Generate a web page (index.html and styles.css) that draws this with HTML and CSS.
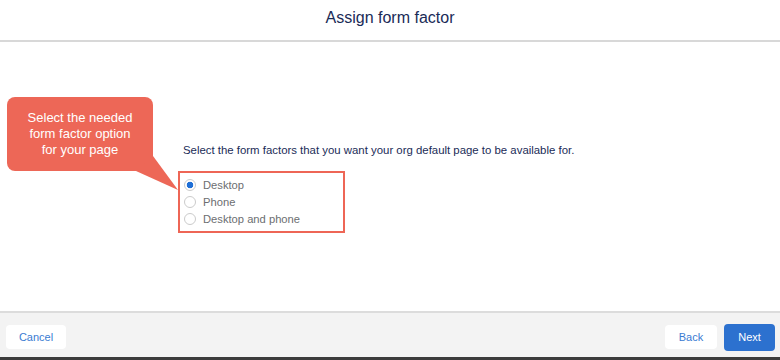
FILE: index.html
```html
<!DOCTYPE html>
<html lang="en">
<head>
    <meta charset="UTF-8">
    <meta name="viewport" content="width=device-width, initial-scale=1.0">
    <title>Assign form factor</title>
    <link rel="stylesheet" href="styles.css">
</head>
<body>
    <div class="header">
        <h1>Assign form factor</h1>
    </div>

    <div class="main">
        <p class="intro">Select the form factors that you want your org default page to be available for.</p>

        <div class="radio-group">
            <label class="radio-row">
                <input type="radio" name="factor" checked>
                <span>Desktop</span>
            </label>
            <label class="radio-row">
                <input type="radio" name="factor">
                <span>Phone</span>
            </label>
            <label class="radio-row">
                <input type="radio" name="factor">
                <span>Desktop and phone</span>
            </label>
        </div>
    </div>

    <div class="footer">
        <button class="btn">Cancel</button>
        <div class="footer-right">
            <button class="btn btn-back">Back</button>
            <button class="btn btn-next">Next</button>
        </div>
    </div>

    <!-- annotation bubble -->
    <div class="callout">
        Select the needed<br>form factor option<br>for your page
        <svg class="callout-tail" width="50" height="40" viewBox="0 0 50 40">
            <polygon points="4,19 46,38 21,4" fill="#ed6757"/>
        </svg>
    </div>
</body>
</html>
```

FILE: styles.css
```css
body {
    margin: 0;
    height: 360px;
    display: flex;
    flex-direction: column;
    font-family: "Liberation Sans", Arial, sans-serif;
    background-color: white;
    position: relative;
    overflow: hidden;
}
.header {
    height: 40px;
    border-bottom: 2px solid #d8d8d8;
    display: flex;
    justify-content: center;
    align-items: center;
}
h1 {
    margin: 0 0 4px 0;
    font-size: 16px;
    font-weight: normal;
    color: #1a2b57;
}
.main {
    flex: 1;
    padding: 101px 0 0 178px;
}
.intro {
    margin: 0 0 14px 5px;
    font-size: 11.4px;
    line-height: 14px;
    color: #1a2b57;
}
.radio-group {
    width: 161px;
    border: 2px solid #ee6656;
    padding: 3px 0 4px 2px;
}
.radio-row {
    display: flex;
    align-items: center;
    height: 17px;
    font-size: 11.2px;
    color: #6c6e71;
}
.radio-row input {
    appearance: none;
    -webkit-appearance: none;
    width: 12px;
    height: 12px;
    margin: 0 7px 0 2px;
    border: 1px solid #cbcbcb;
    border-radius: 50%;
    background-color: white;
    box-sizing: border-box;
}
.radio-row input:checked {
    background: radial-gradient(circle, #1f6fd6 0, #1f6fd6 3px, white 3.6px);
}
.footer {
    height: 40px;
    border-top: 2px solid #dcdcdc;
    border-bottom: 3px solid #3c3c3c;
    background-color: #f3f3f3;
    display: flex;
    justify-content: space-between;
    align-items: center;
    padding: 4px 5px 0 6px;
}
.footer-right {
    display: flex;
    align-items: center;
    gap: 7px;
}
.btn {
    height: 24px;
    width: 60px;
    border: none;
    border-radius: 4px;
    background-color: white;
    color: #3a7bd2;
    font-family: "Liberation Sans", Arial, sans-serif;
    font-size: 11px;
    cursor: pointer;
}
.btn-back {
    width: 52px;
}
.btn-next {
    width: 51px;
    height: 27px;
    background-color: #2c71cf;
    color: white;
}
.callout {
    position: absolute;
    left: 7px;
    top: 97px;
    width: 146px;
    height: 74px;
    box-sizing: border-box;
    padding-top: 13px;
    border-radius: 8px;
    background-color: #ed6757;
    color: white;
    font-size: 13px;
    line-height: 16px;
    text-align: center;
}
.callout-tail {
    position: absolute;
    left: 125px;
    top: 55px;
}
```
